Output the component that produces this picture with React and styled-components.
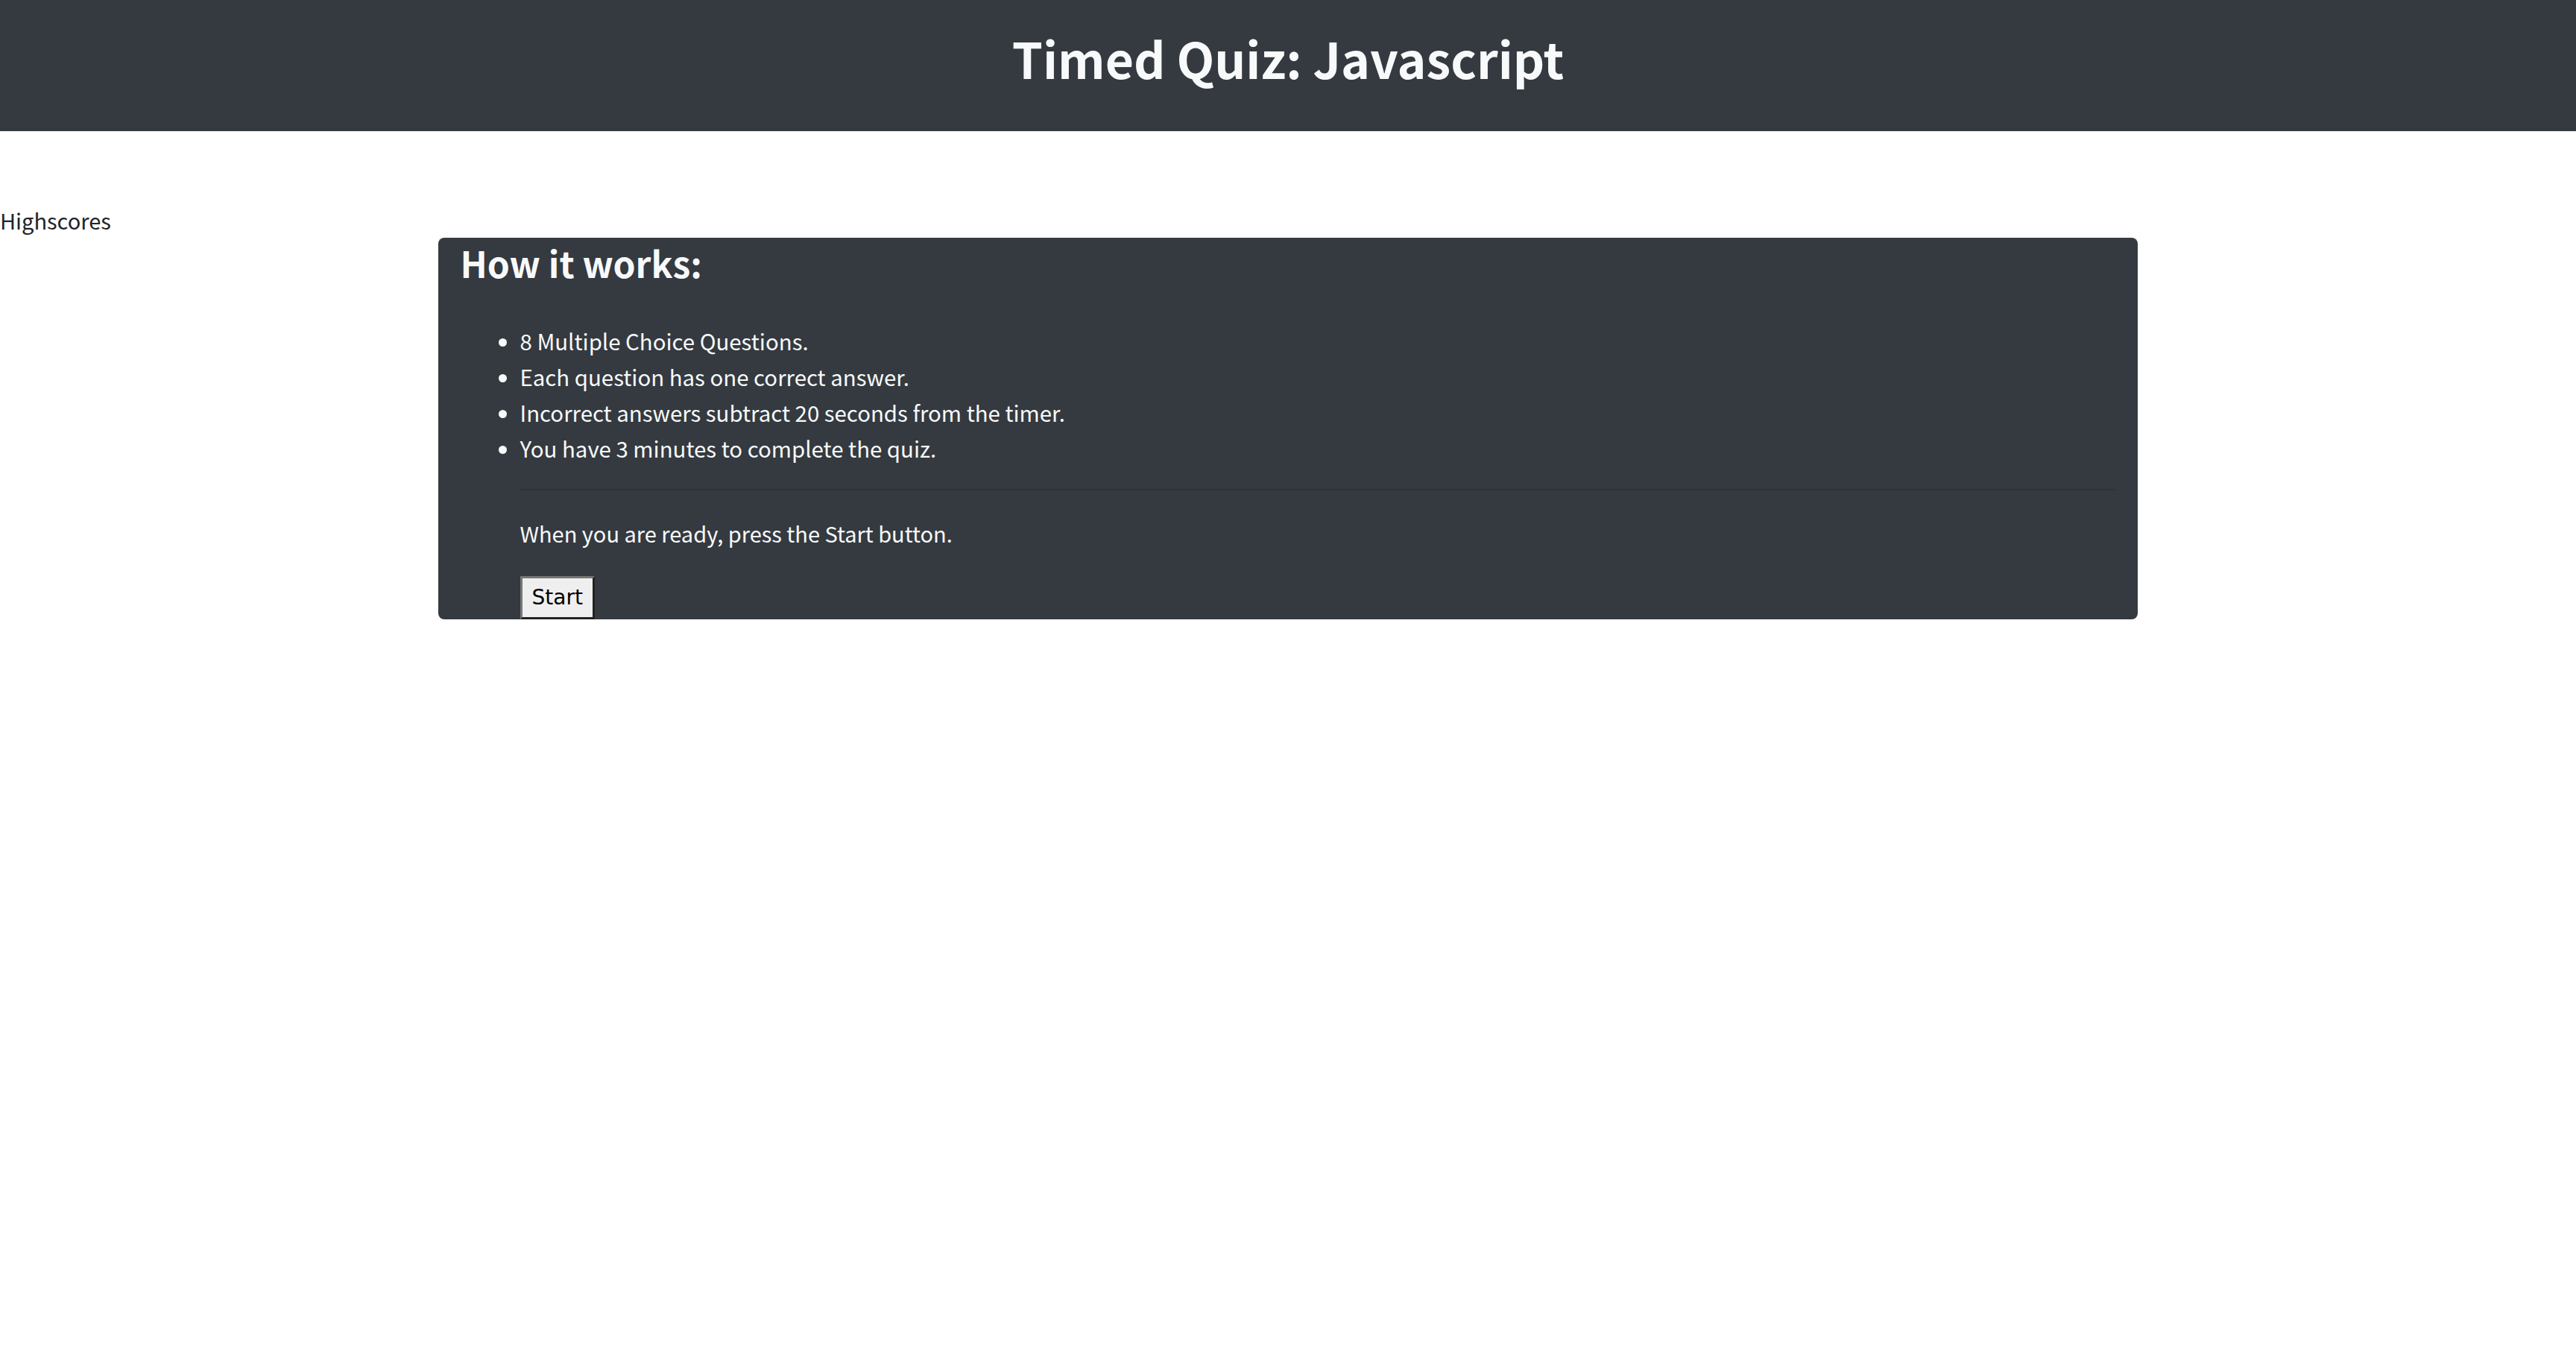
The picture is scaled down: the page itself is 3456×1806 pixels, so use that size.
import React from 'react'
import styled, {createGlobalStyle} from 'styled-components'

const GlobalStyle = createGlobalStyle`
    body {
        margin: 0;
        background: #fff;
        font-family: "Noto Sans CJK KR", "Noto Sans", sans-serif;
        font-size: 29px;
        line-height: 48px;
        color: #212529;
    }
`;

const Header = styled.header`
    height: 176px;
    box-sizing: border-box;
    padding-top: 29px;
    background: #343a40;
    text-align: center;
`;
const Title = styled.h1`
    margin: 0;
    font-size: 66px;
    font-weight: 700;
    line-height: 96px;
    color: #f8f9fa;
`;
const Main = styled.main`
    padding-top: 95px;
`;
const ScoresLink = styled.div`
    cursor: pointer;
`;
const Card = styled.section`
    width: 66%;
    margin: 0 auto;
    box-sizing: border-box;
    padding: 0 30px;
    background: #343a40;
    border-radius: 8px;
    color: #f8f9fa;
`;
const CardTitle = styled.h3`
    margin: 0 0 47px;
    font-size: 48px;
    font-weight: 700;
    line-height: 67px;
`;
const Rules = styled.ul`
    margin: 0;
    padding-left: 80px;
    font-size: 29.4px;
`;
const Indent = styled.div`
    padding-left: 80px;
`;
const Divider = styled.hr`
    margin: 31px 0 33px;
    border: 0;
    border-top: 2px solid rgba(0,0,0,0.12);
`;
const Note = styled.p`
    margin: 0 0 34px;
`;
const StartButton = styled.button`
    display: block;
    padding: 2px 13px;
    font-family: "DejaVu Sans", sans-serif;
    font-size: 28px;
    line-height: 48px;
    color: #000;
    background: #efefef;
    border: 3px solid;
    border-color: #767676 #222 #222 #767676;
    border-radius: 0;
`;

const rules = [
    '8 Multiple Choice Questions.',
    'Each question has one correct answer.',
    'Incorrect answers subtract 20 seconds from the timer.',
    'You have 3 minutes to complete the quiz.',
]

export default () => {
    return(
        <>
            <GlobalStyle/>
            <Header>
                <Title>Timed Quiz: Javascript</Title>
            </Header>
            <Main>
                <ScoresLink>Highscores</ScoresLink>
                <Card>
                    <CardTitle>How it works:</CardTitle>
                    <Rules>
                        {rules.map(r => <li key={r}>{r}</li>)}
                    </Rules>
                    <Indent>
                        <Divider/>
                        <Note>When you are ready, press the Start button.</Note>
                        <StartButton>Start</StartButton>
                    </Indent>
                </Card>
            </Main>
        </>
    )
}
